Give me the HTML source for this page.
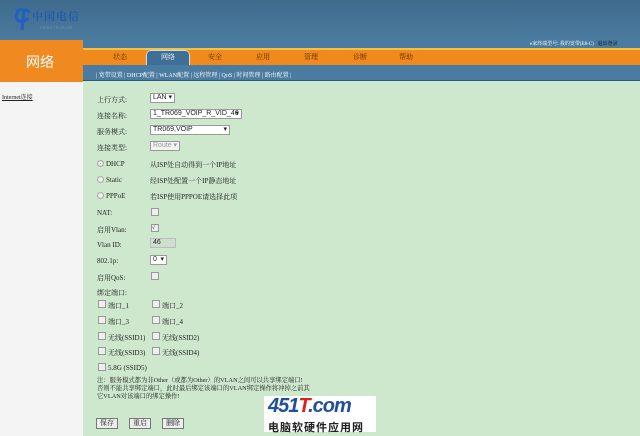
<!DOCTYPE html>
<html><head><meta charset="utf-8"><style>
*{margin:0;padding:0;box-sizing:border-box}
body{width:640px;height:436px;overflow:hidden;position:relative;background:#cde8cd;font-family:"Liberation Serif","Noto Serif CJK SC",serif;font-size:7px;color:#222}
.a{position:absolute;white-space:nowrap}
.cb{position:absolute;width:8px;height:8px;border:1px solid #999;background:#eee}
.rd{position:absolute;width:7px;height:7px;border:1px solid #aaa;border-radius:50%;background:#eee}
.sel{position:absolute;height:10px;border:1px solid #999;background:#fff;font-family:"Liberation Sans",sans-serif;font-size:7px;line-height:8px;padding-left:2px}
.sel:after{content:"▾";position:absolute;right:2px;top:0;font-size:7px}
.btn{position:absolute;height:11px;border:1px solid #777;background:#eee;font-size:7px;line-height:9px;padding:0 3px}
</style></head><body>
<div class="a" style="left:0;top:0;width:640px;height:40px;background:linear-gradient(#3f6b8c,#4a7a9e)"></div>
<svg class="a" style="left:14px;top:6px" width="20" height="26" viewBox="0 0 20 26"><path d="M4 6 Q0 12 5 15 Q10 17 14 12 M10 3 L8 24 M2 5 Q8 2 16 6" stroke="#2060c0" stroke-width="3" fill="none"/></svg>
<div class="a" style="left:32px;top:8px;color:#1e5ab8;font-size:11px;font-weight:bold;letter-spacing:1px">中国电信</div>
<div class="a" style="left:40px;top:25px;color:#6a8fb0;font-size:4px">CHINA TELECOM</div>
<div class="a" style="left:0;top:40px;width:83px;height:42px;background:#f08a20"></div>
<div class="a" style="left:26px;top:52px;color:#fff;font-size:14px;font-family:'Noto Sans CJK SC',sans-serif">网络</div>
<div class="a" style="left:83px;top:40px;width:557px;height:8px;background:#4a7ba0"></div>
<div class="a" style="left:530px;top:40px;color:#fff;font-size:5px">e家终端型号: 我的宽带(E8-C) &nbsp; <span style="color:#000">退出登录</span></div>
<div class="a" style="left:83px;top:48px;width:557px;height:17px;background:#f08a1c;border-top:2px solid #f8c040"></div>
<div class="a" style="left:146px;top:50px;width:44px;height:15px;background:#3f6f94;border:1px solid #c8dde8;border-bottom:0;border-radius:5px 5px 0 0"></div>
<div class="a" style="left:83px;top:52px;width:340px;color:#5a2a00;font-size:7px">
<span class="a" style="left:30px">状态</span><span class="a" style="left:78px;color:#fff">网络</span><span class="a" style="left:125px">安全</span><span class="a" style="left:173px">应用</span><span class="a" style="left:221px">管理</span><span class="a" style="left:270px">诊断</span><span class="a" style="left:316px">帮助</span></div>
<div class="a" style="left:83px;top:65px;width:557px;height:16px;background:#4a7ba0;border-bottom:1px solid #2e5a78"></div>
<div class="a" style="left:96px;top:70px;color:#fff;font-size:6px">| 宽带设置 | DHCP配置 | WLAN配置 | 远程管理 | QoS | 时间管理 | 路由配置 |</div>
<div class="a" style="left:0;top:82px;width:83px;height:354px;background:#f4f4f4"></div>
<div class="a" style="left:2px;top:92px;font-size:6px;text-decoration:underline">Internet连接</div>
<div class="a" style="left:97px;top:95px">上行方式:</div><div class="sel" style="left:150px;top:93px;width:25px">LAN</div>
<div class="a" style="left:97px;top:111px">连接名称:</div><div class="sel" style="left:150px;top:109px;width:92px">1_TR069_VOIP_R_VID_46</div>
<div class="a" style="left:97px;top:127px">服务模式:</div><div class="sel" style="left:150px;top:125px;width:80px">TR069,VOIP</div>
<div class="a" style="left:97px;top:143px">连接类型:</div><div class="sel" style="left:150px;top:141px;width:30px;color:#999;background:#f4f4f4">Route</div>
<div class="rd" style="left:97px;top:160px;background:#888;box-shadow:inset 0 0 0 2px #eee"></div><div class="a" style="left:106px;top:160px">DHCP</div><div class="a" style="left:150px;top:160px">从ISP处自动得到一个IP地址</div>
<div class="rd" style="left:97px;top:176px"></div><div class="a" style="left:106px;top:176px">Static</div><div class="a" style="left:150px;top:176px">经ISP处配置一个IP静态地址</div>
<div class="rd" style="left:97px;top:192px"></div><div class="a" style="left:106px;top:192px">PPPoE</div><div class="a" style="left:150px;top:192px">若ISP使用PPPOE请选择此项</div>
<div class="a" style="left:97px;top:209px">NAT:</div><div class="cb" style="left:151px;top:208px"></div>
<div class="a" style="left:97px;top:225px">启用Vlan:</div><div class="cb" style="left:151px;top:224px;font-size:6px;line-height:6px">✓</div>
<div class="a" style="left:97px;top:241px">Vlan ID:</div><div class="a" style="left:150px;top:238px;width:26px;height:10px;border:1px solid #bbb;background:#cde0cd;padding-left:2px;font-family:'Liberation Sans';font-size:7px">46</div>
<div class="a" style="left:97px;top:257px">802.1p:</div><div class="sel" style="left:150px;top:255px;width:17px">0</div>
<div class="a" style="left:97px;top:273px">启用QoS:</div><div class="cb" style="left:151px;top:272px"></div>
<div class="a" style="left:97px;top:288px">绑定端口:</div>
<div class="cb" style="left:98px;top:300px"></div><div class="a" style="left:108px;top:301px">端口_1</div>
<div class="cb" style="left:152px;top:300px"></div><div class="a" style="left:162px;top:301px">端口_2</div>
<div class="cb" style="left:98px;top:316px"></div><div class="a" style="left:108px;top:317px">端口_3</div>
<div class="cb" style="left:152px;top:316px"></div><div class="a" style="left:162px;top:317px">端口_4</div>
<div class="cb" style="left:98px;top:332px"></div><div class="a" style="left:108px;top:333px">无线(SSID1)</div>
<div class="cb" style="left:152px;top:332px"></div><div class="a" style="left:162px;top:333px">无线(SSID2)</div>
<div class="cb" style="left:98px;top:347px"></div><div class="a" style="left:108px;top:348px">无线(SSID3)</div>
<div class="cb" style="left:152px;top:347px"></div><div class="a" style="left:162px;top:348px">无线(SSID4)</div>
<div class="cb" style="left:98px;top:363px"></div><div class="a" style="left:108px;top:364px">5.8G (SSID5)</div>
<div class="a" style="left:97px;top:377px;line-height:8px;font-size:6.3px">注：服务模式都为非Other（或都为Other）的VLAN之间可以共享绑定端口!<br>否则不能共享绑定端口，此时最后绑定该端口的VLAN绑定操作将冲掉之前其<br>它VLAN对该端口的绑定操作!</div>
<div class="btn" style="left:96px;top:418px">保存</div><div class="btn" style="left:129px;top:418px">重启</div><div class="btn" style="left:162px;top:418px">删除</div>
<div class="a" style="left:264px;top:396px;width:112px;height:36px;background:#fff"></div>
<div class="a" style="left:268px;top:395px;color:#1f4fa0;font-family:'Liberation Sans',sans-serif;font-style:italic;font-weight:bold;font-size:20px;letter-spacing:-1px">451<span style="color:#e02020">T</span>.com</div>
<div class="a" style="left:268px;top:419px;color:#222;font-family:'Noto Sans CJK SC',sans-serif;font-weight:bold;font-size:11px;letter-spacing:1px">电脑软硬件应用网</div>
</body></html>
